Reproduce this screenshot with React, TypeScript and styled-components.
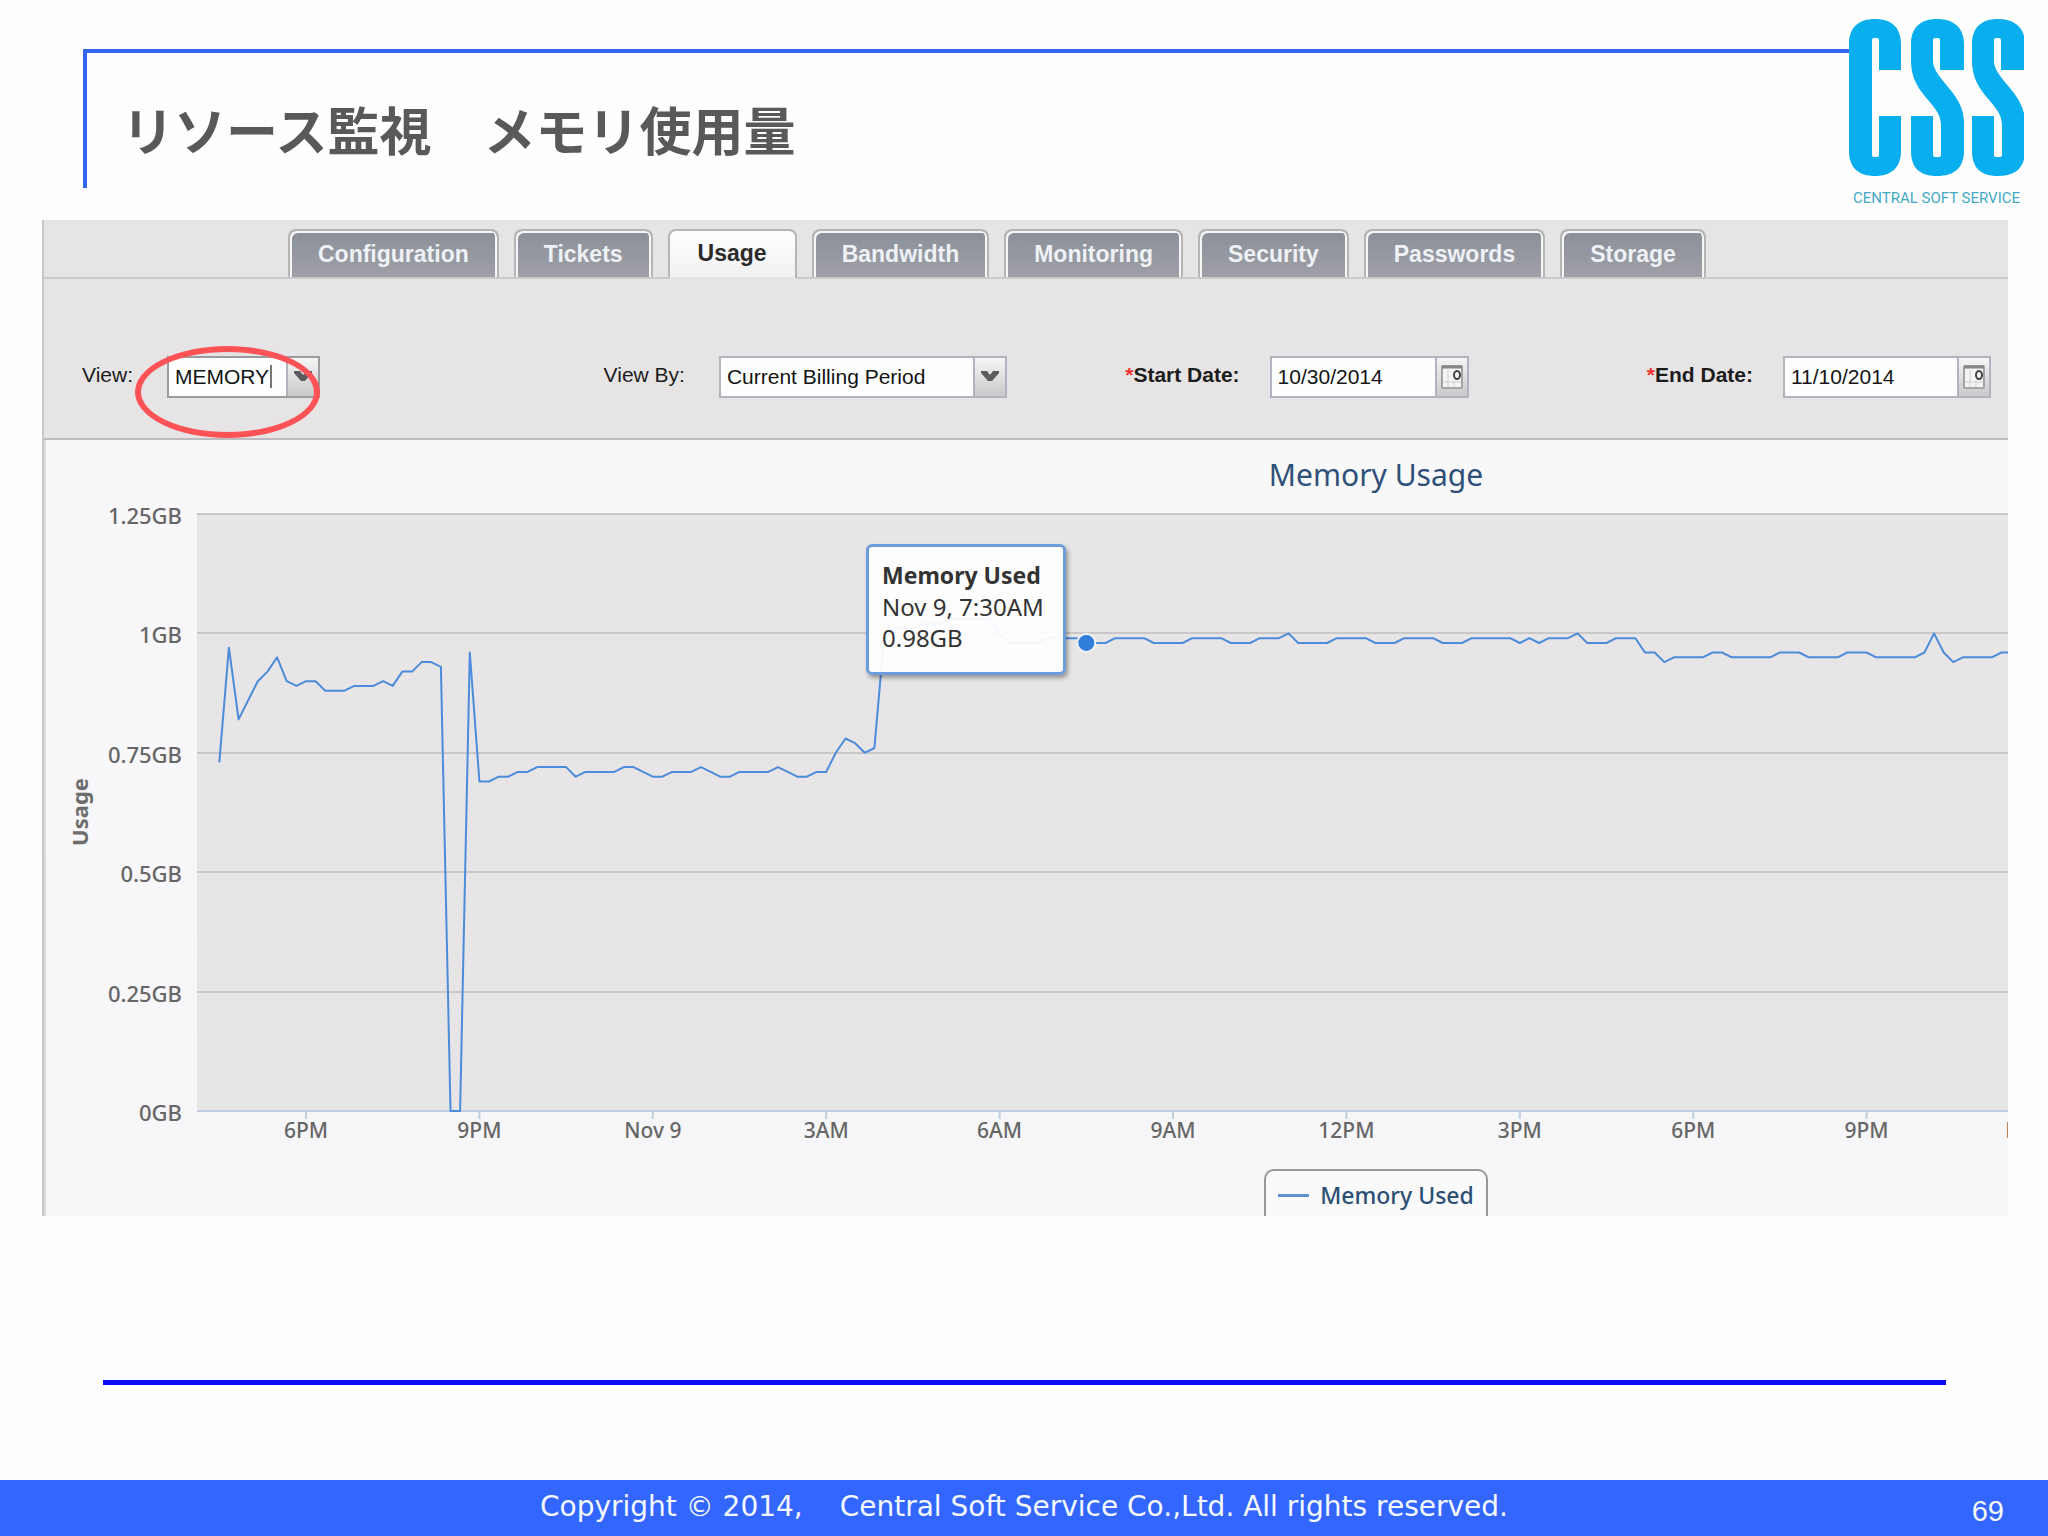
import React from "react";
import styled, { createGlobalStyle } from "styled-components";

const GlobalStyle = createGlobalStyle`
  *, *::before, *::after { box-sizing: border-box; }
  body {
    margin: 0;
    background: #fefefe;
    font-family: "Liberation Sans", "Noto Sans CJK JP", sans-serif;
  }
`;

const Slide = styled.div`
  display: flex;
  flex-direction: column;
  min-height: 100vh;
`;

/* ---------- slide header ---------- */

const Header = styled.header`
  display: flex;
  align-items: flex-start;
  height: 220px;
  padding: 19px 24px 0 83px;
`;

const TitleFrame = styled.div`
  flex: 1;
  height: 139px;
  margin-top: 30px;
  padding: 46px 0 0 35px;
  border-top: 4px solid #3366f0;
  border-left: 4px solid #3366f0;
`;

const SlideTitle = styled.h1`
  margin: 0;
  color: #595959;
  font: bold 52px/60px "Noto Sans CJK JP", sans-serif;
  white-space: nowrap;
`;

const Brand = styled.div`
  width: 175px;
  color: #45a9c4;
  font: 15px/20px Roboto, sans-serif;
  text-align: center;
  white-space: nowrap;

  svg {
    display: block;
    margin-bottom: 12px;
  }
`;

/* ---------- console panel ---------- */

const Panel = styled.main`
  margin: 0 40px 0 42px;
  border-left: 2px solid #c8c8ca;
  background: #e6e4e4;
  overflow: hidden;
`;

const TabRow = styled.nav`
  display: flex;
  gap: 15px;
  padding: 9px 0 0 244px;
  border-bottom: 2px solid #cbc9ca;
`;

const Tab = styled.button<{ $active?: boolean }>`
  flex: none;
  height: ${(p) => (p.$active ? 50 : 48)}px;
  margin: 0 0 ${(p) => (p.$active ? -2 : 0)}px;
  padding: 0 28px ${(p) => (p.$active ? 2 : 0)}px;
  border: 2px solid #b5b5b8;
  border-bottom: ${(p) => (p.$active ? "2px solid #e6e4e4" : "0")};
  border-radius: 8px 8px 0 0;
  background: ${(p) =>
    p.$active
      ? "linear-gradient(#ffffff, #f2f1f1)"
      : "linear-gradient(#8b9098, #9f9fa7)"};
  box-shadow: ${(p) =>
    p.$active ? "none" : "inset 2px 2px 0 #f6f6f6, inset -2px 0 0 #f6f6f6"};
  color: ${(p) => (p.$active ? "#2b2b2b" : "#eef1f5")};
  font: bold 23px/28px "Liberation Sans", sans-serif;
  white-space: nowrap;
`;

const Filters = styled.form`
  display: grid;
  grid-template-columns: 1fr 1fr 1fr auto;
  padding: 77px 17px 40px 38px;
  border-bottom: 2px solid #bdbbbd;
`;

const Field = styled.div<{ $required?: boolean }>`
  display: flex;
  align-items: center;
  gap: ${(p) => (p.$required ? 30 : 34)}px;
`;

const Label = styled.label<{ $required?: boolean }>`
  padding-bottom: 4px;
  color: #1c1c1c;
  font-size: 21px;
  line-height: 24px;
  font-weight: ${(p) => (p.$required ? "bold" : "normal")};
  white-space: nowrap;

  &::before {
    content: ${(p) => (p.$required ? '"*"' : "none")};
    color: #f03030;
  }
`;

const Box = styled.div<{ $width: number; $dark?: boolean }>`
  position: relative;
  display: flex;
  width: ${(p) => p.$width}px;
  height: 42px;
  border: 2px solid ${(p) => (p.$dark ? "#9c9c9e" : "#b4b2be")};
  background: #fdfefe;

  input,
  select {
    flex: 1;
    min-width: 0;
    padding: 0 0 0 6px;
    border: 0;
    border-radius: 0;
    outline: 0;
    appearance: none;
    background: transparent;
    color: #141414;
    font: 21px/24px "Liberation Sans", sans-serif;
  }
`;

const Trigger = styled.button`
  display: grid;
  place-items: center;
  flex: none;
  width: 32px;
  padding: 0;
  border: 0;
  border-left: 2px solid #b4b2be;
  background: linear-gradient(#f6f6f6, #c9c8ca);
`;

const Caret = styled.span`
  position: absolute;
  top: 7px;
  left: 101px;
  width: 2px;
  height: 23px;
  background: #777;
`;

const RedRing = styled.span`
  position: absolute;
  top: -12px;
  left: -34px;
  width: 185px;
  height: 92px;
  border: 6px solid #fd5256;
  border-radius: 50%;
  pointer-events: none;
`;

/* ---------- chart ---------- */

const ChartArea = styled.section`
  height: 776px;
  border-left: 2px solid #dddddd;
  background: linear-gradient(#f9f8f9, #f6f5f8);
  overflow: hidden;
  font-family: "Noto Sans", sans-serif;
`;

const ChartCanvas = styled.div`
  position: relative;
  display: flex;
  flex-direction: column;
  align-items: center;
  width: 2660px;

  svg {
    display: block;
  }
`;

const ChartTitle = styled.h2`
  margin: 0;
  padding: 12px 0 2px;
  color: #2f5078;
  font-size: 30px;
  line-height: 46px;
  font-weight: normal;
`;

const Tooltip = styled.div`
  position: absolute;
  top: 104px;
  left: 820px;
  width: 200px;
  height: 131px;
  padding: 13px;
  border: 3px solid #6c9cdc;
  border-radius: 6px;
  background: rgba(255, 254, 255, 0.94);
  box-shadow: 2px 3px 4px rgba(0, 0, 0, 0.35);
  color: #333;
  font-size: 24px;
  line-height: 31px;
  white-space: nowrap;

  strong {
    display: block;
    font-size: 23px;
  }
`;

const Legend = styled.div`
  display: flex;
  align-items: center;
  gap: 11px;
  margin-top: 9px;
  padding: 8px 12px 12px;
  border: 2px solid #98989c;
  border-radius: 10px;
  background: #fafafb;
  color: #2c4f74;
  font-size: 23px;
  line-height: 32px;
  font-weight: 500;

  &::before {
    content: "";
    width: 31px;
    height: 3px;
    background: #5d93d6;
  }
`;

/* ---------- slide footer ---------- */

const Rule = styled.hr`
  width: auto;
  height: 5px;
  margin: 164px 102px 95px 103px;
  border: 0;
  background: #0a0af5;
`;

const Footer = styled.footer`
  display: grid;
  grid-template-columns: 1fr auto 1fr;
  height: 56px;
  margin-top: auto;
  padding: 0 44px;
  background: #3366ff;
  color: #f4f8ff;
`;

const Copyright = styled.p`
  grid-column: 2;
  margin: 0;
  font: 28px/54px "DejaVu Sans", "Noto Sans CJK JP", sans-serif;
  white-space: nowrap;
`;

const PageNumber = styled.span`
  justify-self: end;
  font-size: 29px;
  line-height: 63px;
`;

/* ---------- drawings ---------- */

const S_SHAPE =
  "M0 25C0 8 10 0 26 0S53 8 53 25V51H29V21Q29 19 27 19H24Q22 19 22 21V42C22 60 53 74 53 103V132C53 149 43 157 26 157S0 149 0 132V97H22V136Q22 138 24 138H28Q30 138 30 136V106C30 84 0 76 0 42Z";
const C_SHAPE =
  "M0 25C0 8 10 0 26 0S52 8 52 25V51H30V21Q30 19 28 19H25Q23 19 23 21V136Q23 138 25 138H28Q30 138 30 136V97H52V132C52 149 42 157 26 157S0 149 0 132Z";

const Logo = () => (
  <svg width="175" height="157" viewBox="0 0 175 157" fill="#08aeed" role="img" aria-label="CSS">
    <path d={C_SHAPE} />
    <path d={S_SHAPE} transform="translate(62 0)" />
    <path d={S_SHAPE} transform="translate(123 0)" />
  </svg>
);

const Chevron = () => (
  <svg width="18" height="12" viewBox="0 0 18 12" aria-hidden="true">
    <path d="M0 0H6L9 4L12 0H18V2L11 10H7L0 2Z" fill="#5c5c60" />
  </svg>
);

const CalendarIcon = () => (
  <svg width="22" height="24" viewBox="0 0 22 24" aria-hidden="true">
    <rect x="1" y="1" width="20" height="22" rx="1" fill="#f4f4f4" stroke="#a3a3a8" strokeWidth="2" />
    <path d="M1 2H21" stroke="#85858a" strokeWidth="3" />
    <path d="M2 17H20M7 5V22M13 15V22" stroke="#d0d0d3" />
    <ellipse cx="16" cy="10" rx="3" ry="4" fill="none" stroke="#444" strokeWidth="2" />
  </svg>
);

/* Memory in hundredths of a GB, one sample each ten minutes from 4:30 PM: [value, repeat]. */
const RUNS: [number, number][] = [
  [73, 1], [97, 1], [82, 1], [86, 1], [90, 1], [92, 1], [95, 1], [90, 1], [89, 1],
  [90, 2], [88, 3], [89, 3], [90, 1], [89, 1], [92, 2], [94, 2], [93, 1], [0, 2],
  [96, 1], [69, 2], [70, 2], [71, 2], [72, 4], [70, 1], [71, 4], [72, 2], [71, 1],
  [70, 2], [71, 3], [72, 1], [71, 1], [70, 2], [71, 4], [72, 1], [71, 1], [70, 2],
  [71, 2], [75, 1], [78, 1], [77, 1], [75, 1], [76, 1], [99, 1], [101, 3], [102, 3],
  [103, 5], [100, 1], [98, 4], [99, 4], [98, 3], [99, 4], [98, 4], [99, 4], [98, 3],
  [99, 3], [100, 1], [98, 4], [99, 4], [98, 3], [99, 4], [98, 3], [99, 5], [98, 1],
  [99, 1], [98, 1], [99, 3], [100, 1], [98, 3], [99, 3], [96, 2], [94, 1], [95, 4],
  [96, 2], [95, 5], [96, 3], [95, 4], [96, 3], [95, 5], [96, 1], [100, 1], [96, 1],
  [94, 1], [95, 4], [96, 2],
];
const SAMPLES = RUNS.flatMap(([value, count]) => Array<number>(count).fill(value));

const PLOT_LEFT = 151;
const BASE = 611;
const HOUR_3 = 173.4;
const FIRST_TICK = 260;
const sampleX = (i: number) => FIRST_TICK + ((i - 9) * HOUR_3) / 18;
const valueY = (v: number) => BASE - v * 4.776;

const LINE = SAMPLES.map((v, i) => `${sampleX(i).toFixed(1)},${valueY(v).toFixed(1)}`).join(" ");
const Y_TICKS = [
  { value: 0, text: "0GB" },
  { value: 25, text: "0.25GB" },
  { value: 50, text: "0.5GB" },
  { value: 75, text: "0.75GB" },
  { value: 100, text: "1GB" },
  { value: 125, text: "1.25GB" },
];
const X_TICKS = ["6PM", "9PM", "Nov 9", "3AM", "6AM", "9AM", "12PM", "3PM", "6PM", "9PM", "Nov 10"];

const AxisText = styled.text`
  fill: #666;
  font-weight: 500;
`;

const MemoryChart = () => (
  <svg width="2660" height="660" viewBox="0 0 2660 660" role="img" aria-label="Memory usage">
    <rect x={PLOT_LEFT} y={valueY(125)} width="2490" height={BASE - valueY(125)} fill="#e7e5e5" />
    {Y_TICKS.map(({ value, text }) => (
      <g key={text}>
        <path
          d={`M${PLOT_LEFT} ${Math.round(valueY(value))}H2641`}
          stroke={value === 0 ? "#c0cde0" : "#c9c7c8"}
          strokeWidth="2"
        />
        <AxisText x="136" y={Math.round(valueY(value)) + 10} textAnchor="end" fontSize="22">
          {text}
        </AxisText>
      </g>
    ))}
    {X_TICKS.map((text, i) => (
      <g key={i}>
        <path d={`M${FIRST_TICK + i * HOUR_3} 612V619`} stroke="#c0d0e0" strokeWidth="2" />
        <AxisText x={FIRST_TICK + i * HOUR_3} y="638" textAnchor="middle" fontSize="21">
          {text}
        </AxisText>
      </g>
    ))}
    <text transform="translate(42 312) rotate(-90)" textAnchor="middle" fontSize="22" fontWeight="bold" fill="#6d6d6d">
      Usage
    </text>
    <polyline points={LINE} fill="none" stroke="#4c8cda" strokeWidth="2" strokeLinejoin="round" />
    <circle cx={sampleX(90)} cy={valueY(98)} r="9" fill="#2f7ed8" stroke="#eef2f8" strokeWidth="2" />
  </svg>
);

const TABS = ["Configuration", "Tickets", "Usage", "Bandwidth", "Monitoring", "Security", "Passwords", "Storage"];

export default function App() {
  return (
    <Slide>
      <GlobalStyle />
      <Header>
        <TitleFrame>
          <SlideTitle>リソース監視　メモリ使用量</SlideTitle>
        </TitleFrame>
        <Brand>
          <Logo />
          CENTRAL SOFT SERVICE
        </Brand>
      </Header>

      <Panel>
        <TabRow>
          {TABS.map((name) => (
            <Tab key={name} type="button" $active={name === "Usage"}>
              {name}
            </Tab>
          ))}
        </TabRow>

        <Filters>
          <Field>
            <Label htmlFor="view">View:</Label>
            <Box $width={153} $dark>
              <input id="view" defaultValue="MEMORY" />
              <Caret />
              <Trigger type="button" aria-label="Open view list">
                <Chevron />
              </Trigger>
              <RedRing />
            </Box>
          </Field>
          <Field>
            <Label htmlFor="view-by">View By:</Label>
            <Box $width={288}>
              <select id="view-by">
                <option>Current Billing Period</option>
              </select>
              <Trigger type="button" aria-label="Open period list">
                <Chevron />
              </Trigger>
            </Box>
          </Field>
          <Field $required>
            <Label htmlFor="start" $required>Start Date:</Label>
            <Box $width={199}>
              <input id="start" defaultValue="10/30/2014" />
              <Trigger type="button" aria-label="Pick start date">
                <CalendarIcon />
              </Trigger>
            </Box>
          </Field>
          <Field $required>
            <Label htmlFor="end" $required>End Date:</Label>
            <Box $width={208}>
              <input id="end" defaultValue="11/10/2014" />
              <Trigger type="button" aria-label="Pick end date">
                <CalendarIcon />
              </Trigger>
            </Box>
          </Field>
        </Filters>

        <ChartArea>
          <ChartCanvas>
            <ChartTitle>Memory Usage</ChartTitle>
            <MemoryChart />
            <Legend>Memory Used</Legend>
            <Tooltip>
              <strong>Memory Used</strong>
              Nov 9, 7:30AM
              <br />
              0.98GB
            </Tooltip>
          </ChartCanvas>
        </ChartArea>
      </Panel>

      <Rule />
      <Footer>
        <Copyright>Copyright © 2014,　 Central Soft Service Co.,Ltd. All rights reserved.</Copyright>
        <PageNumber>69</PageNumber>
      </Footer>
    </Slide>
  );
}
